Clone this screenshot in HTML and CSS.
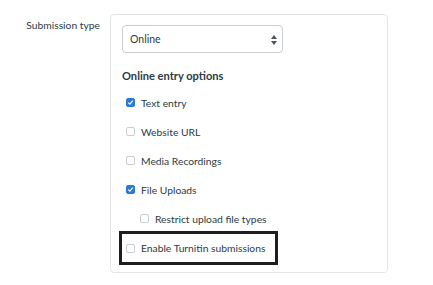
FILE: index.html
```html
<!DOCTYPE html>
<html lang="en">
<head>
  <meta charset="UTF-8">
  <title>Submission type</title>
  <link rel="stylesheet" href="styles.css">
</head>
<body>
  <div class="form-row">
    <div class="form-label">Submission type</div>

    <div class="form-box">
      <div class="select">
        <span>Online</span>
        <svg class="arrows" width="6" height="10" viewBox="0 0 6 10">
          <path d="M3 0 L6 4 L0 4 Z" fill="#4a555d"/>
          <path d="M3 10 L6 6 L0 6 Z" fill="#4a555d"/>
        </svg>
      </div>

      <h3>Online entry options</h3>

      <div class="option">
        <span class="check checked">
          <svg width="7" height="7" viewBox="0 0 7 7"><path d="M1.2 3.6 L2.9 5.2 L5.8 1.6" fill="none" stroke="#fff" stroke-width="1.1"/></svg>
        </span>
        Text entry
      </div>
      <div class="option">
        <span class="check"></span>
        Website URL
      </div>
      <div class="option">
        <span class="check"></span>
        Media Recordings
      </div>
      <div class="option">
        <span class="check checked">
          <svg width="7" height="7" viewBox="0 0 7 7"><path d="M1.2 3.6 L2.9 5.2 L5.8 1.6" fill="none" stroke="#fff" stroke-width="1.1"/></svg>
        </span>
        File Uploads
      </div>
      <div class="option sub">
        <span class="check"></span>
        Restrict upload file types
      </div>
      <div class="option highlight">
        <span class="check"></span>
        Enable Turnitin submissions
      </div>
    </div>
  </div>
</body>
</html>
```

FILE: styles.css
```css
* {
  margin: 0;
  padding: 0;
  box-sizing: border-box;
  font-family: 'Lato', sans-serif;
}

body {
  background: #fff;
  color: #2d3b45;
  font-size: 10.3px;
}

.form-row {
  display: flex;
  padding-top: 14px;
}

.form-label {
  width: 110px;
  padding: 5px 10px 0 0;
  text-align: right;
  font-size: 10.3px;
}

.form-box {
  width: 278px;
  height: 259px;
  border: 1px solid #e3e5e7;
  border-radius: 4px;
  padding: 10px 0 0 11px;
}

.select {
  display: flex;
  align-items: center;
  justify-content: space-between;
  width: 161px;
  height: 28px;
  border: 1px solid #c7cdd1;
  border-radius: 4px;
  padding: 0 5px 0 7px;
  font-size: 10.5px;
}

.arrows {
  margin-top: 1px;
}

h3 {
  font-size: 11.1px;
  font-weight: bold;
  margin: 15px 0 5px;
  line-height: 15px;
}

.option {
  display: flex;
  align-items: center;
  width: fit-content;
  height: 29px;
  padding: 0 10px 0 4px;
}

.option.sub {
  padding-left: 18px;
}

.option.highlight {
  height: 28px;
  margin-top: 1px;
  outline: 3px solid #1e1e1e;
}

.check {
  display: inline-flex;
  align-items: center;
  justify-content: center;
  width: 9px;
  height: 9px;
  margin-right: 6px;
  border: 1px solid #c7cdd1;
  border-radius: 2px;
  background: #fff;
}

.check.checked {
  background: #2b7bd6;
  border-color: #2b7bd6;
}
```
